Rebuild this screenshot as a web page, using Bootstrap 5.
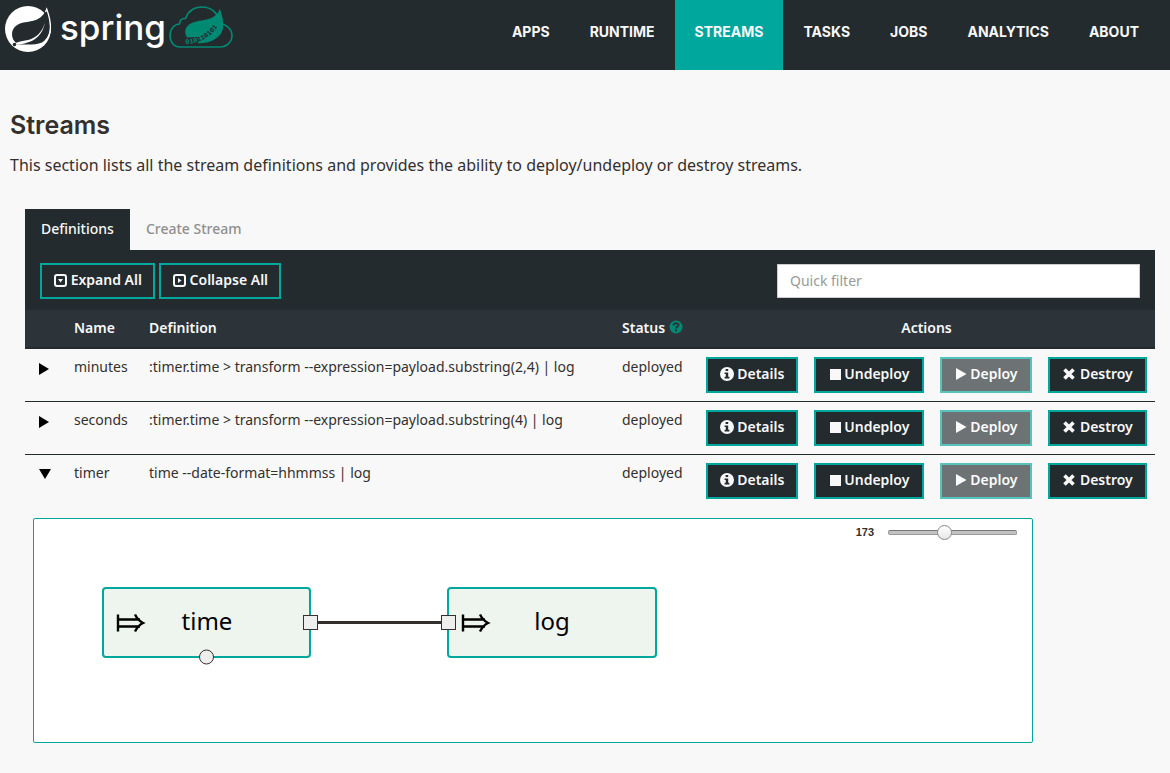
<!DOCTYPE html>
<html lang="en">
<head>
<meta charset="utf-8">
<meta name="viewport" content="width=device-width, initial-scale=1">
<title>Streams</title>
<link href="https://cdn.jsdelivr.net/npm/bootstrap@5.3.0/dist/css/bootstrap.min.css" rel="stylesheet">
<style>
  :root { --ink: #242b2e; --teal: #00a79d; --leaf: #008a73; }
  body { background: #f8f8f8; color: #34302d; font: 14px/20px "Noto Sans", sans-serif; }
  .topbar { background: var(--ink); min-height: 70px; }
  .topbar nav { padding-right: 11px; }
  .wordmark { color: #fff; font: 500 35px/46px Inter, sans-serif; }
  .topbar .nav-link { color: #f8f8f8; font: 700 14px/20px Inter, sans-serif; padding: 22px 20px 28px; }
  .topbar .nav-link.active { background: var(--teal); }
  .intro-area { padding: 24px 10px 0; }
  h1 { font: 600 25px/30px Inter, sans-serif; margin: 16px 0 13px; }
  .intro { font-size: 16px; line-height: 24px; }
  .panel-area { padding: 32px 15px 0 25px; }
  .stream-tabs .nav-link { color: #8f8f8f; font-weight: 500; padding: 10px 16px 11px; border-radius: 0; }
  .stream-tabs .nav-link.active { background: var(--ink); color: #f8f8f8; }
  .toolbar { background: var(--ink); padding: 13px 15px 11px; }
  .btn-stream { --bs-btn-color: #f8f8f8; --bs-btn-bg: var(--ink); --bs-btn-border-color: var(--teal);
    --bs-btn-hover-color: #fff; --bs-btn-hover-bg: var(--teal); --bs-btn-hover-border-color: var(--teal);
    --bs-btn-disabled-color: #fff; --bs-btn-disabled-bg: var(--ink); --bs-btn-disabled-border-color: var(--teal);
    --bs-btn-border-width: 2px; --bs-btn-border-radius: 0;
    font-size: 14px; font-weight: 600; line-height: 20px; height: 36px; padding: 5px 8px 7px; white-space: nowrap; }
  .btn-tool { padding-left: 11px; padding-right: 11px; }
  .btn-stream svg, .streams th svg { vertical-align: -2px; }
  .streams th svg { vertical-align: -1px; }
  .quick-filter { width: 363px; height: 34px; border-radius: 0; border-color: #ccc; font-size: 14px; line-height: 20px; padding: 5px 12px 7px; }
  .quick-filter::placeholder { color: #999; }
  .streams { table-layout: fixed; width: 100%; }
  .streams th, .streams td { padding: 8px; vertical-align: top; }
  .streams thead th { background: #2c343a; color: #f8f8f8; font-weight: 600; border-bottom: 2px solid var(--ink); padding-bottom: 9px; }
  .streams tbody tr + tr { border-top: 1px solid var(--ink); }
  .streams tbody tr.graph-row { border-top: 0; }
  .streams .graph-row td { padding: 11px 8px; }
  .streams .toggle-cell { padding: 9px 13px; }
  .toggle { background: none; border: 0; padding: 0; display: block; }
  .col-toggle { width: 41px; } .col-name { width: 75px; } .col-status { width: 84px; }
  .col-narrow { width: 108px; } .col-wide { width: 126px; } .col-last { width: 115px; }
  .graph { background: #fff; border: 1px solid var(--teal); border-radius: 2px; max-width: 1000px; }
  .zoom-row { padding: 3px 15px 3px 0; gap: 14px; }
  .zoom-row label { color: #34302d; font: 700 11px/20px "Liberation Sans", sans-serif; }
  .zoom-slider { appearance: none; background: none; width: 129px; height: 20px; margin: 0; }
  .zoom-slider::-webkit-slider-runnable-track { height: 5px; border: 1px solid #999; border-top-color: #777; border-radius: 2px; background: #c2c2c2; }
  .zoom-slider::-webkit-slider-thumb { appearance: none; width: 15px; height: 15px; margin-top: -6px; border: 1px solid #888; border-radius: 50%; background: linear-gradient(#fff, #e6e6e6); }
  .graph text { font: 24px "Noto Sans", sans-serif; fill: #000; text-anchor: middle; }
  .node-box { fill: #eef4ee; stroke: var(--teal); stroke-width: 2; }
  .port { fill: #eee; stroke: #34302d; }
</style>
</head>
<body>
<svg width="0" height="0" class="d-none" aria-hidden="true">
  <symbol id="i-info" viewBox="0 0 14 14"><path fill="currentColor" fill-rule="evenodd" d="M7 0a7 7 0 1 0 0 14A7 7 0 0 0 7 0ZM5.600 2h2.600v2H5.600ZM4.600 5.400h3.600v4.400h1.200v1.600H4.600V9.800h1.200V7H4.600Z"/></symbol>
  <symbol id="i-stop" viewBox="0 0 12 14"><path fill="currentColor" d="M1 2h11v11H1z"/></symbol>
  <symbol id="i-play" viewBox="0 0 12 14"><path fill="currentColor" d="M1 1l10.500 6L1 13z"/></symbol>
  <symbol id="i-cross" viewBox="0 0 14 14"><path stroke="currentColor" stroke-width="3.600" d="M2.500 2.500l9 9M11.500 2.500l-9 9"/></symbol>
  <symbol id="node-arrow" viewBox="0 0 30 20"><path fill="none" stroke="#000" stroke-width="2.400" d="M2 1.500v17M2 6.500h22M2 13.500h22M19 1.500q3 6 8 8.500q-5 2.500-8 8.500"/></symbol>
</svg>

<header class="topbar d-flex justify-content-between align-items-start">
  <a href="#" class="d-flex text-decoration-none ps-1" aria-label="Spring Cloud Data Flow">
    <svg class="mt-1" width="48" height="50" viewBox="4 4 48 50" aria-hidden="true">
      <circle cx="28" cy="29" r="23" fill="#fff"/>
      <path fill="#242b2e" d="M46 10C52 23 52 37 42 42.500C35 45.500 25 44.500 17 44.300L13.500 40C10 33 13 26 20 23.500C29 20.500 40 23 46 10Z"/>
      <path fill="#fff" d="M45 22.500C42 33 35 38.500 28 40C22 41 18 42 14 43.500L17 44.500C31 43.500 42 38 45 22.500Z"/>
      <path fill="none" stroke="#fff" stroke-width="1.300" d="M45.500 12L46.700 9C51 21 53 33 45.500 40.500"/>
      <circle cx="14.500" cy="44.500" r="1.800" fill="#242b2e"/>
    </svg>
    <span class="wordmark ms-2 mt-1">spring</span>
    <svg class="mt-1" width="68" height="46" viewBox="166 4 68 46" aria-hidden="true">
      <linearGradient id="bits-ink" gradientUnits="userSpaceOnUse" x1="185" x2="219" y1="0" y2="0"><stop offset=".38" stop-color="#008a73"/><stop offset=".38" stop-color="#242b2e"/></linearGradient>
      <path fill="none" stroke="#008a73" stroke-width="1.600" d="M180 47h40c7 0 12-5 12-11.500S226 24 219.500 23.500C219 13 211 7 202 7c-8 0-14 4.500-16.500 11.500c-4-.5-6 2-6 5.500c-5 0-9.500 5-9.500 11.500S174 47 180 47Z"/>
      <path fill="#008a73" d="M220 9C224 21 226 32 216 38.500C211 42 205 43 198 43.500C199 41 199 39 198 37L187 37.500C183 31 186 25 193 22.500C202 19 214 22 220 9Z"/>
      <path id="bits" fill="none" d="M185.500 44Q208 43 219 24"/>
      <text fill="url(#bits-ink)" font-family="Liberation Mono, monospace" font-weight="700" font-size="7"><textPath href="#bits">010110101</textPath></text>
    </svg>
  </a>
  <nav class="nav flex-nowrap" aria-label="Main">
    <a class="nav-link" href="#">APPS</a>
    <a class="nav-link" href="#">RUNTIME</a>
    <a class="nav-link active" aria-current="page" href="#">STREAMS</a>
    <a class="nav-link" href="#">TASKS</a>
    <a class="nav-link" href="#">JOBS</a>
    <a class="nav-link" href="#">ANALYTICS</a>
    <a class="nav-link" href="#">ABOUT</a>
  </nav>
</header>

<main>
  <div class="intro-area">
    <h1>Streams</h1>
    <p class="intro mb-0">This section lists all the stream definitions and provides the ability to deploy/undeploy or destroy streams.</p>
  </div>

  <div class="panel-area">
    <ul class="nav stream-tabs">
      <li class="nav-item"><a class="nav-link active" aria-current="true" href="#">Definitions</a></li>
      <li class="nav-item"><a class="nav-link" href="#">Create Stream</a></li>
    </ul>
    <div class="toolbar d-flex justify-content-between align-items-center">
      <div class="d-flex gap-1">
        <button type="button" class="btn btn-stream btn-tool"><svg width="14" height="14" aria-hidden="true"><rect x="2" y="2" width="11" height="11" rx="2" fill="none" stroke="currentColor" stroke-width="2"/><path fill="currentColor" d="M5 6h5l-2.500 3.500z"/></svg> Expand All</button>
        <button type="button" class="btn btn-stream btn-tool"><svg width="14" height="14" aria-hidden="true"><rect x="2" y="2" width="11" height="11" rx="2" fill="none" stroke="currentColor" stroke-width="2"/><path fill="currentColor" d="M6 5v5l3.500-2.500z"/></svg> Collapse All</button>
      </div>
      <input type="text" class="form-control quick-filter" placeholder="Quick filter" aria-label="Quick filter">
    </div>

    <table class="streams">
      <colgroup><col class="col-toggle"><col class="col-name"><col><col class="col-status"><col class="col-narrow"><col class="col-wide"><col class="col-narrow"><col class="col-last"></colgroup>
      <thead>
        <tr>
          <th></th><th>Name</th><th>Definition</th>
          <th class="text-nowrap">Status <svg width="14" height="14" viewBox="0 0 14 14" aria-hidden="true"><circle cx="7" cy="7" r="6.500" fill="#008a73"/><path fill="none" stroke="#2c343a" stroke-width="2" d="M4.500 5.500c0-3 5-3 5-.5c0 1.800-2.500 1.500-2.500 3.500M7 9.500v2"/></svg></th>
          <th colspan="4" class="text-center">Actions</th>
        </tr>
      </thead>
      <tbody>
        <tr>
          <td class="toggle-cell"><button type="button" class="toggle" aria-label="Expand minutes"><svg class="d-block" width="14" height="20"><path d="M1 5v12l10-6z"/></svg></button></td>
          <td>minutes</td><td>:timer.time &gt; transform --expression=payload.substring(2,4) | log</td><td>deployed</td>
          <td><button type="button" class="btn btn-stream w-100"><svg width="14" height="14" aria-hidden="true"><use href="#i-info"/></svg> Details</button></td>
          <td><button type="button" class="btn btn-stream w-100"><svg width="12" height="14" aria-hidden="true"><use href="#i-stop"/></svg> Undeploy</button></td>
          <td><button type="button" class="btn btn-stream w-100" disabled><svg width="12" height="14" aria-hidden="true"><use href="#i-play"/></svg> Deploy</button></td>
          <td><button type="button" class="btn btn-stream w-100"><svg width="14" height="14" aria-hidden="true"><use href="#i-cross"/></svg> Destroy</button></td>
        </tr>
        <tr>
          <td class="toggle-cell"><button type="button" class="toggle" aria-label="Expand seconds"><svg class="d-block" width="14" height="20"><path d="M1 5v12l10-6z"/></svg></button></td>
          <td>seconds</td><td>:timer.time &gt; transform --expression=payload.substring(4) | log</td><td>deployed</td>
          <td><button type="button" class="btn btn-stream w-100"><svg width="14" height="14" aria-hidden="true"><use href="#i-info"/></svg> Details</button></td>
          <td><button type="button" class="btn btn-stream w-100"><svg width="12" height="14" aria-hidden="true"><use href="#i-stop"/></svg> Undeploy</button></td>
          <td><button type="button" class="btn btn-stream w-100" disabled><svg width="12" height="14" aria-hidden="true"><use href="#i-play"/></svg> Deploy</button></td>
          <td><button type="button" class="btn btn-stream w-100"><svg width="14" height="14" aria-hidden="true"><use href="#i-cross"/></svg> Destroy</button></td>
        </tr>
        <tr>
          <td class="toggle-cell"><button type="button" class="toggle" aria-label="Collapse timer"><svg class="d-block" width="14" height="20"><path d="M1 5h12l-6 10z"/></svg></button></td>
          <td>timer</td><td>time --date-format=hhmmss | log</td><td>deployed</td>
          <td><button type="button" class="btn btn-stream w-100"><svg width="14" height="14" aria-hidden="true"><use href="#i-info"/></svg> Details</button></td>
          <td><button type="button" class="btn btn-stream w-100"><svg width="12" height="14" aria-hidden="true"><use href="#i-stop"/></svg> Undeploy</button></td>
          <td><button type="button" class="btn btn-stream w-100" disabled><svg width="12" height="14" aria-hidden="true"><use href="#i-play"/></svg> Deploy</button></td>
          <td><button type="button" class="btn btn-stream w-100"><svg width="14" height="14" aria-hidden="true"><use href="#i-cross"/></svg> Destroy</button></td>
        </tr>
        <tr class="graph-row">
          <td colspan="8">
            <div class="graph">
              <div class="zoom-row d-flex justify-content-end align-items-center">
                <label for="zoom">173</label>
                <input type="range" id="zoom" class="zoom-slider" min="0" max="400" value="173">
              </div>
              <svg class="d-block w-100" height="197" role="img" aria-label="time flows into log">
                <rect class="node-box" x="69" y="43" width="207" height="69" rx="3"/>
                <rect class="node-box" x="414" y="43" width="208" height="69" rx="3"/>
                <path stroke="#34302d" stroke-width="3" d="M283 77.500H408"/>
                <use href="#node-arrow" x="82" y="68" width="30" height="20"/>
                <use href="#node-arrow" x="427" y="68" width="30" height="20"/>
                <text x="173" y="85">time</text>
                <text x="518" y="85">log</text>
                <rect class="port" x="269.500" y="70.500" width="14" height="14"/>
                <rect class="port" x="407.500" y="70.500" width="14" height="14"/>
                <circle class="port" cx="172.500" cy="112" r="7"/>
              </svg>
            </div>
          </td>
        </tr>
      </tbody>
    </table>
  </div>
</main>
<script src="https://cdn.jsdelivr.net/npm/bootstrap@5.3.0/dist/js/bootstrap.bundle.min.js"></script>
</body>
</html>
